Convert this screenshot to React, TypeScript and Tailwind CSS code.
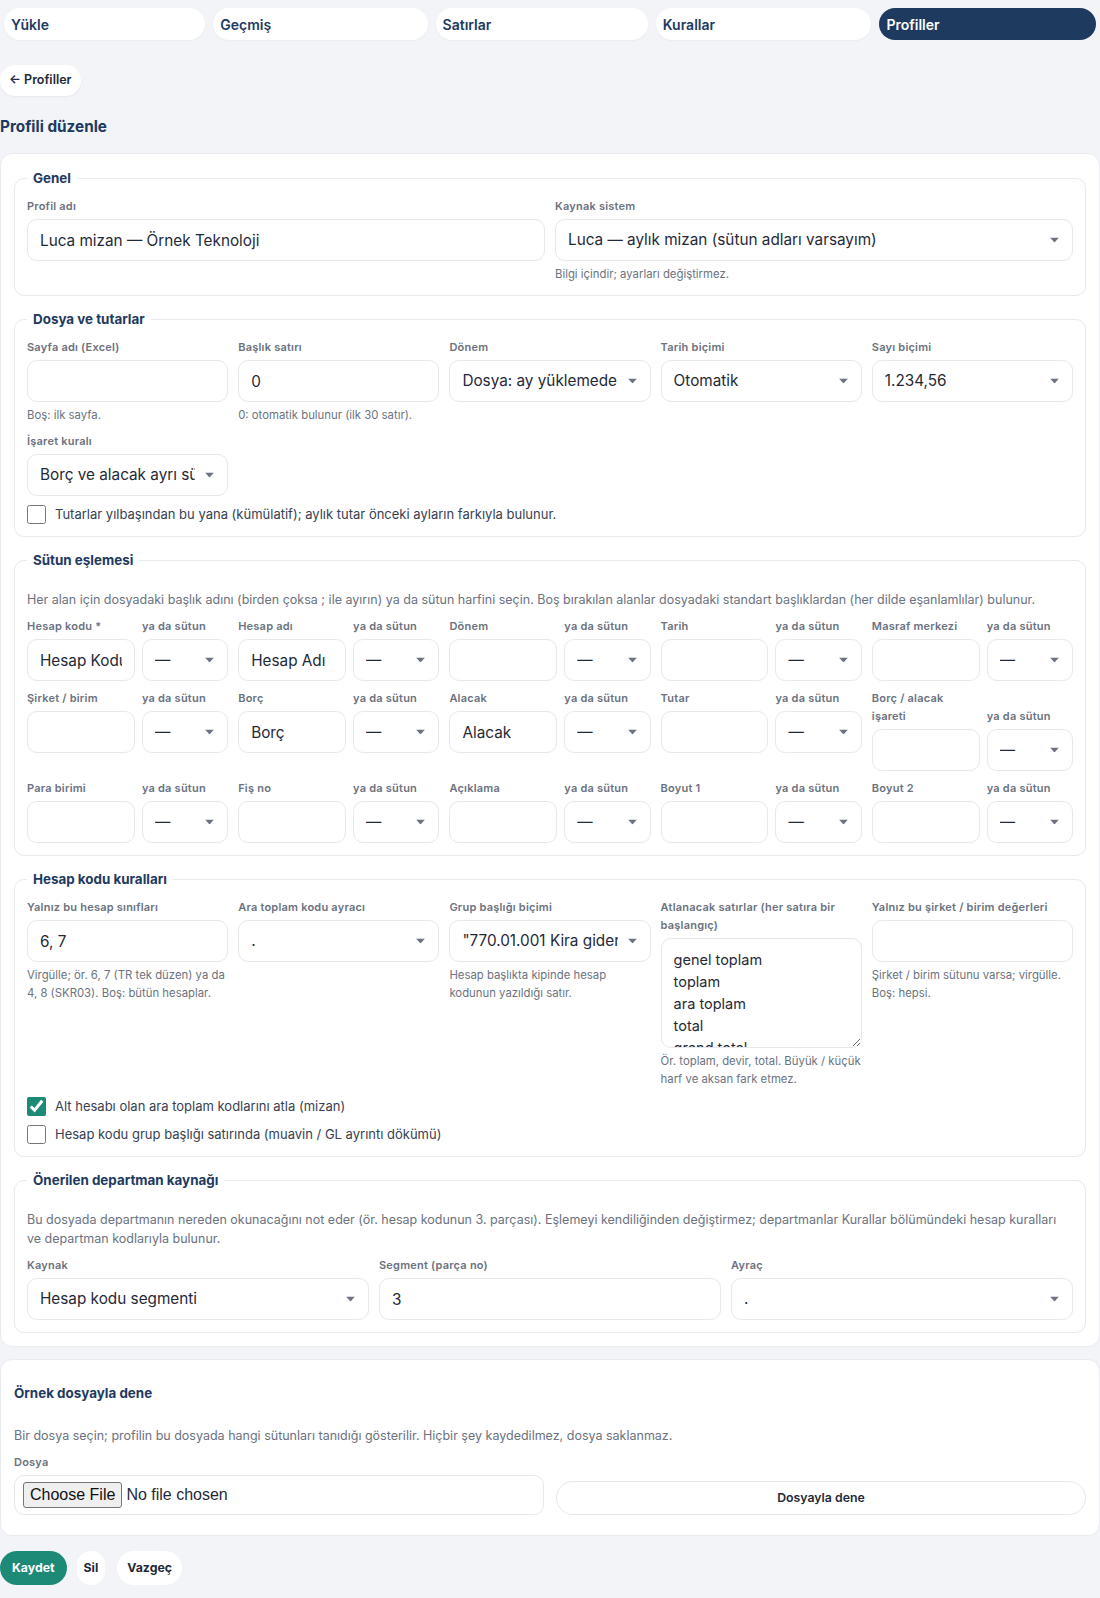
import React from "react";

const tabs = ["Yükle", "Geçmiş", "Satırlar", "Kurallar", "Profiller"];

function Caret() {
  return (
    <svg
      className="pointer-events-none absolute right-[14px] top-1/2 -translate-y-1/2"
      width="9"
      height="5"
      viewBox="0 0 9 5"
    >
      <polygon points="0,0 9,0 4.5,5" fill="#6b7280" />
    </svg>
  );
}

function Label({ children }: { children: React.ReactNode }) {
  return (
    <label className="mb-1 block text-[11px] font-semibold leading-[18px] tracking-[0.02em] text-[#6b7280]">
      {children}
    </label>
  );
}

function Help({ children }: { children: React.ReactNode }) {
  return <p className="mt-1 text-[11.35px] leading-[18px] text-[#6b7280]">{children}</p>;
}

function TextInput({ value = "" }: { value?: string }) {
  return (
    <input
      type="text"
      defaultValue={value}
      className="h-[42px] w-full rounded-[10px] border border-[#e6e8ec] bg-white px-3 text-[15.3px] text-[#1f2937] outline-none"
    />
  );
}

function Select({ value }: { value: string }) {
  return (
    <div className="relative">
      <select
        defaultValue={value}
        className="h-[42px] w-full appearance-none rounded-[10px] border border-[#e6e8ec] bg-white pl-3 pr-8 text-[15.3px] text-[#1f2937] outline-none"
      >
        <option>{value}</option>
      </select>
      <Caret />
    </div>
  );
}

function Section({ title, children }: { title: string; children: React.ReactNode }) {
  return (
    <fieldset className="rounded-[10px] border border-[#e8eaee] px-3 pb-3 pt-[9px]">
      <legend className="px-1.5 text-[13.4px] font-bold leading-5 text-[#1e3a5f]">{title}</legend>
      {children}
    </fieldset>
  );
}

function Check({ label, checked = false }: { label: string; checked?: boolean }) {
  return (
    <label className="flex items-center gap-[9px] text-[13px] leading-5 text-[#374151]">
      <input
        type="checkbox"
        defaultChecked={checked}
        className="m-0 h-[19px] w-[19px] accent-[#1d8a78]"
      />
      {label}
    </label>
  );
}

function Pair({ label, value = "" }: { label: string; value?: string }) {
  return (
    <div className="grid grid-cols-[1fr_0.8fr] items-end gap-x-[7px]">
      <div>
        <Label>{label}</Label>
        <TextInput value={value} />
      </div>
      <div>
        <Label>ya da sütun</Label>
        <Select value="—" />
      </div>
    </div>
  );
}

const mapRows = [
  [["Hesap kodu *", "Hesap Kodu"], ["Hesap adı", "Hesap Adı"], ["Dönem", ""], ["Tarih", ""], ["Masraf merkezi", ""]],
  [["Şirket / birim", ""], ["Borç", "Borç"], ["Alacak", "Alacak"], ["Tutar", ""], ["Borç / alacak işareti", ""]],
  [["Para birimi", ""], ["Fiş no", ""], ["Açıklama", ""], ["Boyut 1", ""], ["Boyut 2", ""]],
];

export default function App() {
  return (
    <div className="min-h-screen bg-[#f2f4f7] pb-4 font-['Inter',sans-serif] text-[#1f2937]">
      <nav className="flex gap-2 px-1 pt-2">
        {tabs.map((t) => (
          <button
            key={t}
            className={
              t === "Profiller"
                ? "h-8 flex-auto rounded-full bg-[#1e3a5f] px-[7px] text-left text-[14px] font-semibold text-white"
                : "h-8 flex-auto rounded-full bg-white px-[7px] text-left text-[14px] font-semibold text-[#1e3a5f] shadow-[0_1px_2px_rgba(15,23,42,0.04)]"
            }
          >
            {t}
          </button>
        ))}
      </nav>

      <button className="ml-0 mt-[25px] h-[31px] rounded-full bg-white px-[9px] text-[12.5px] font-semibold text-[#1f2937] shadow-[0_1px_2px_rgba(15,23,42,0.05)]">
        ← Profiller
      </button>

      <h1 className="mt-[19px] text-[15.3px] font-bold leading-6 text-[#1e3a5f]">Profili düzenle</h1>

      <div className="mt-[14px] space-y-[13px] rounded-xl border border-[#e9ebef] bg-white px-[13px] pb-[13px] pt-[14px]">
        <Section title="Genel">
          <div className="grid grid-cols-2 gap-x-2.5">
            <div>
              <Label>Profil adı</Label>
              <TextInput value="Luca mizan — Örnek Teknoloji" />
            </div>
            <div>
              <Label>Kaynak sistem</Label>
              <Select value="Luca — aylık mizan (sütun adları varsayım)" />
              <Help>Bilgi içindir; ayarları değiştirmez.</Help>
            </div>
          </div>
        </Section>

        <Section title="Dosya ve tutarlar">
          <div className="grid grid-cols-5 items-start gap-x-2.5 gap-y-2">
            <div>
              <Label>Sayfa adı (Excel)</Label>
              <TextInput />
              <Help>Boş: ilk sayfa.</Help>
            </div>
            <div>
              <Label>Başlık satırı</Label>
              <TextInput value="0" />
              <Help>0: otomatik bulunur (ilk 30 satır).</Help>
            </div>
            <div>
              <Label>Dönem</Label>
              <Select value="Dosya: ay yüklemede seçilir" />
            </div>
            <div>
              <Label>Tarih biçimi</Label>
              <Select value="Otomatik" />
            </div>
            <div>
              <Label>Sayı biçimi</Label>
              <Select value="1.234,56" />
            </div>
            <div>
              <Label>İşaret kuralı</Label>
              <Select value="Borç ve alacak ayrı sütunlarda" />
            </div>
          </div>
          <div className="mt-2">
            <Check label="Tutarlar yılbaşından bu yana (kümülatif); aylık tutar önceki ayların farkıyla bulunur." />
          </div>
        </Section>

        <Section title="Sütun eşlemesi">
          <p className="mb-2 mt-3 text-[12.5px] leading-[18px] text-[#6b7280]">
            Her alan için dosyadaki başlık adını (birden çoksa ; ile ayırın) ya da sütun harfini seçin. Boş bırakılan alanlar dosyadaki standart başlıklardan (her dilde eşanlamlılar) bulunur.
          </p>
          <div className="space-y-2">
            {mapRows.map((row, i) => (
              <div
                key={i}
                className={
                  i === 2
                    ? "mt-0.5 grid grid-cols-5 items-start gap-x-2.5"
                    : "grid grid-cols-5 items-start gap-x-2.5"
                }
              >
                {row.map(([l, v]) => (
                  <Pair key={l} label={l} value={v} />
                ))}
              </div>
            ))}
          </div>
        </Section>

        <Section title="Hesap kodu kuralları">
          <div className="grid grid-cols-5 items-start gap-x-2.5">
            <div>
              <Label>Yalnız bu hesap sınıfları</Label>
              <TextInput value="6, 7" />
              <Help>Virgülle; ör. 6, 7 (TR tek düzen) ya da 4, 8 (SKR03). Boş: bütün hesaplar.</Help>
            </div>
            <div>
              <Label>Ara toplam kodu ayracı</Label>
              <Select value="." />
            </div>
            <div>
              <Label>Grup başlığı biçimi</Label>
              <Select value={'"770.01.001 Kira gideri" (kod + ad)'} />
              <Help>Hesap başlıkta kipinde hesap kodunun yazıldığı satır.</Help>
            </div>
            <div>
              <Label>Atlanacak satırlar (her satıra bir başlangıç)</Label>
              <textarea
                defaultValue={"genel toplam\ntoplam\nara toplam\ntotal\ngrand total\ndevir"}
                className="block h-[110px] w-full overflow-hidden rounded-[10px] border border-[#e6e8ec] bg-white px-3 py-2.5 text-[14.5px] leading-[22px] text-[#1f2937] outline-none"
              />
              <Help>Ör. toplam, devir, total. Büyük / küçük harf ve aksan fark etmez.</Help>
            </div>
            <div>
              <Label>Yalnız bu şirket / birim değerleri</Label>
              <TextInput />
              <Help>Şirket / birim sütunu varsa; virgülle. Boş: hepsi.</Help>
            </div>
          </div>
          <div className="mt-2 space-y-2">
            <Check label="Alt hesabı olan ara toplam kodlarını atla (mizan)" checked />
            <Check label="Hesap kodu grup başlığı satırında (muavin / GL ayrıntı dökümü)" />
          </div>
        </Section>

        <Section title="Önerilen departman kaynağı">
          <p className="mb-2 mt-[11px] text-[12.5px] leading-[19px] text-[#6b7280]">
            Bu dosyada departmanın nereden okunacağını not eder (ör. hesap kodunun 3. parçası). Eşlemeyi kendiliğinden değiştirmez; departmanlar Kurallar bölümündeki hesap kuralları ve departman kodlarıyla bulunur.
          </p>
          <div className="grid grid-cols-3 gap-x-2.5">
            <div>
              <Label>Kaynak</Label>
              <Select value="Hesap kodu segmenti" />
            </div>
            <div>
              <Label>Segment (parça no)</Label>
              <TextInput value="3" />
            </div>
            <div>
              <Label>Ayraç</Label>
              <Select value="." />
            </div>
          </div>
        </Section>
      </div>

      <div className="mt-3 rounded-xl border border-[#e9ebef] bg-white px-[13px] pb-5 pt-[23px]">
        <h2 className="text-[13.4px] font-bold leading-5 text-[#1e3a5f]">Örnek dosyayla dene</h2>
        <p className="mt-6 text-[12.5px] leading-[18px] text-[#6b7280]">
          Bir dosya seçin; profilin bu dosyada hangi sütunları tanıdığı gösterilir. Hiçbir şey kaydedilmez, dosya saklanmaz.
        </p>
        <div className="mt-2 grid grid-cols-2 items-end gap-x-3">
          <div>
            <Label>Dosya</Label>
            <input
              type="file"
              className="block w-full rounded-[10px] border border-[#e6e8ec] bg-white px-2 py-1.5 font-['Liberation_Sans',sans-serif] text-base text-[#1f2937] file:mr-1 file:rounded-[3px] file:border file:border-solid file:border-[#767676] file:bg-[#efefef] file:px-1.5 file:py-0 file:text-[#111]"
            />
          </div>
          <button className="h-[34px] rounded-full border border-[#e6e8ec] bg-white text-[12.3px] font-semibold text-[#1f2937]">
            Dosyayla dene
          </button>
        </div>
      </div>

      <div className="mt-[15px] flex gap-2.5">
        <button className="h-[34px] rounded-full bg-[#1d8a78] px-3 text-[12.3px] font-bold text-white">Kaydet</button>
        <button className="h-[34px] rounded-full bg-white px-[7px] text-[12.3px] font-bold text-[#1f2937]">Sil</button>
        <button className="ml-0.5 h-[34px] rounded-full bg-white px-2.5 text-[12.3px] font-bold text-[#1f2937]">Vazgeç</button>
      </div>
    </div>
  );
}
